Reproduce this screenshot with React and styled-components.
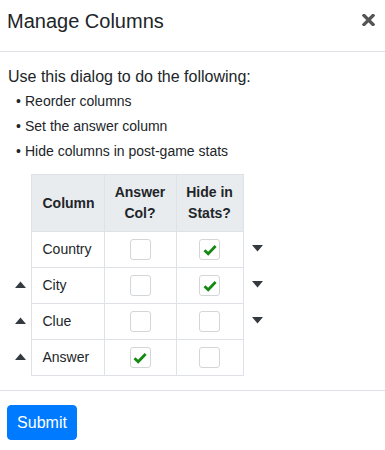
import React, { useState } from 'react';
import styled, { createGlobalStyle } from 'styled-components';

const GlobalStyle = createGlobalStyle`
  html, body {
    margin: 0;
    padding: 0;
    background: #fff;
  }
  body {
    font-family: "Liberation Sans", Arial, sans-serif;
    color: #212529;
  }
`

const Modal = styled.div`
  width: 385px;
  display: flex;
  flex-direction: column;
`

const Header = styled.div`
  height: 52px;
  box-sizing: border-box;
  padding: 9px 10px 0 7px;
  display: flex;
  justify-content: space-between;
  align-items: flex-start;
  border-bottom: 1px solid #dee2e6;
`

const Title = styled.h5`
  margin: 0;
  font-size: 20px;
  font-weight: 400;
  line-height: 24px;
`

const Close = styled.button`
  border: none;
  background: none;
  padding: 0;
  margin-top: 5px;
  width: 13px;
  height: 12px;
  display: flex;
  cursor: pointer;
`

const Body = styled.div`
  padding: 13px 8px 14px 8px;
`

const Intro = styled.p`
  margin: 0;
  font-size: 16px;
  line-height: 24px;
`

const List = styled.ul`
  margin: 0 0 10px 8px;
  padding: 0;
  list-style: none;
  font-size: 14px;
  line-height: 25px;

  li {
    display: flex;
  }

  li::before {
    content: "•";
    width: 9px;
  }
`

const Grid = styled.table`
  border-collapse: collapse;
  font-size: 14px;
  line-height: 21px;
  table-layout: fixed;
`

const HeadCell = styled.th`
  background: #e9ecef;
  border: 1px solid #dee2e6;
  font-weight: 700;
  width: ${p => p.$w}px;
  height: 57px;
  padding: 0;
  text-align: ${p => (p.$left ? 'left' : 'center')};
  padding-left: ${p => (p.$left ? 11 : 0)}px;
  vertical-align: middle;
  box-sizing: border-box;
`

const Cell = styled.td`
  border: 1px solid #dee2e6;
  height: 36px;
  padding: 0 0 0 ${p => (p.$left ? 11 : 0)}px;
  text-align: ${p => (p.$left ? 'left' : 'center')};
  vertical-align: middle;
  box-sizing: border-box;
`

const ArrowCell = styled.td`
  border: none;
  padding: 0 0 0 ${p => p.$pad}px;
  width: ${p => p.$w}px;
  vertical-align: middle;
  box-sizing: border-box;
`

const ArrowButton = styled.span`
  display: flex;
  width: 11px;
  height: 7px;
  margin-top: -2px;
  cursor: pointer;
`

const Box = styled.span`
  display: inline-flex;
  width: 21px;
  height: 21px;
  box-sizing: border-box;
  border: 1px solid #d3d6d9;
  border-radius: 3px;
  background: #fff;
  vertical-align: middle;
  align-items: center;
  justify-content: center;
  cursor: pointer;
`

const Footer = styled.div`
  border-top: 1px solid #dee2e6;
  padding: 14px 7px;
`

const SubmitButton = styled.button`
  font-family: "Liberation Sans", Arial, sans-serif;
  font-size: 16px;
  line-height: 24px;
  height: 35px;
  width: 70px;
  padding: 0;
  color: #fff;
  background: #007bff;
  border: 1px solid #007bff;
  border-radius: 4px;
  cursor: pointer;
`

const Triangle = ({ up }) => (
  <svg width="11" height="7" viewBox="0 0 11 7">
    <path d={up ? 'M0 7 L5.5 0.5 L11 7 Z' : 'M0 0 L11 0 L5.5 6.5 Z'} fill="#343a40" />
  </svg>
);

const Check = ({ on, onClick }) => (
  <Box onClick={onClick}>
    {on && (
      <svg width="14" height="12" viewBox="0 0 14 12">
        <path d="M1.5 6.2 L5.2 9.8 L12.6 2" fill="none" stroke="#13890f" strokeWidth="2.7" />
      </svg>
    )}
  </Box>
);

const initial = [
  { name: 'Country', answer: false, hide: true },
  { name: 'City', answer: false, hide: true },
  { name: 'Clue', answer: false, hide: false },
  { name: 'Answer', answer: true, hide: false },
];

function App() {
  const [cols, setCols] = useState(initial);

  const move = (i, dir) => {
    const next = [...cols];
    const [c] = next.splice(i, 1);
    next.splice(i + dir, 0, c);
    setCols(next);
  };

  const setAnswer = (i) => setCols(cols.map((c, j) => ({ ...c, answer: j === i })));
  const toggleHide = (i) => setCols(cols.map((c, j) => (j === i ? { ...c, hide: !c.hide } : c)));

  return (
    <Modal>
      <GlobalStyle />
      <Header>
        <Title>Manage Columns</Title>
        <Close aria-label="Close">
          <svg width="13" height="12" viewBox="0 0 13 12">
            <path d="M2 1.5 L11 10.5 M11 1.5 L2 10.5" stroke="#555" strokeWidth="3.3" strokeLinecap="square" />
          </svg>
        </Close>
      </Header>
      <Body>
        <Intro>Use this dialog to do the following:</Intro>
        <List>
          <li>Reorder columns</li>
          <li>Set the answer column</li>
          <li>Hide columns in post-game stats</li>
        </List>
        <Grid>
          <thead>
            <tr>
              <ArrowCell $w={23} $pad={7} />
              <HeadCell $left $w={73}>Column</HeadCell>
              <HeadCell $w={72}>Answer<br />Col?</HeadCell>
              <HeadCell $w={67}>Hide in<br />Stats?</HeadCell>
              <ArrowCell $w={30} $pad={8} />
            </tr>
          </thead>
          <tbody>
            {cols.map((c, i) => (
              <tr key={c.name}>
                <ArrowCell $w={23} $pad={7}>
                  {i > 0 && <ArrowButton onClick={() => move(i, -1)}><Triangle up /></ArrowButton>}
                </ArrowCell>
                <Cell $left>{c.name}</Cell>
                <Cell><Check on={c.answer} onClick={() => setAnswer(i)} /></Cell>
                <Cell><Check on={c.hide} onClick={() => toggleHide(i)} /></Cell>
                <ArrowCell $w={30} $pad={8}>
                  {i < cols.length - 1 && <ArrowButton onClick={() => move(i, 1)}><Triangle /></ArrowButton>}
                </ArrowCell>
              </tr>
            ))}
          </tbody>
        </Grid>
      </Body>
      <Footer>
        <SubmitButton>Submit</SubmitButton>
      </Footer>
    </Modal>
  );
}

export default App;
